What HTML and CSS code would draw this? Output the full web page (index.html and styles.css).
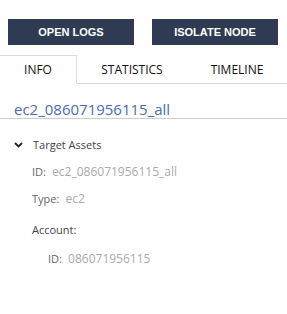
FILE: index.html
```html
<!DOCTYPE html>
<html lang="en">
<head>
    <meta charset="UTF-8">
    <title>Node Details</title>
    <link rel="stylesheet" href="styles.css">
</head>
<body>
    <div class="panel">
        <div class="actions">
            <button class="action-btn">OPEN LOGS</button>
            <button class="action-btn">ISOLATE NODE</button>
        </div>

        <div class="tabs">
            <div class="tab active">INFO</div>
            <div class="tab">STATISTICS</div>
            <div class="tab">TIMELINE</div>
        </div>

        <h2 class="node-title">ec2_086071956115_all</h2>

        <div class="tree">
            <div class="tree-head">
                <svg class="chevron" width="9" height="6" viewBox="0 0 9 6">
                    <path d="M1 1 L4.5 4.5 L8 1" fill="none" stroke="#222" stroke-width="1.8"/>
                </svg>
                <span>Target Assets</span>
            </div>
            <div class="row"><span class="key">ID:</span> <span class="val">ec2_086071956115_all</span></div>
            <div class="row"><span class="key">Type:</span> <span class="val">ec2</span></div>
            <div class="group">
                <div class="row group-head"><span class="key dark">Account:</span></div>
                <div class="row nested"><span class="key">ID:</span> <span class="val">086071956115</span></div>
            </div>
        </div>
    </div>
</body>
</html>
```

FILE: styles.css
```css
body {
    margin: 0;
    font-family: 'Open Sans', sans-serif;
    background: #fff;
    color: #333;
}

.panel {
    width: 287px;
}

/* top buttons */
.actions {
    display: flex;
    justify-content: space-between;
    padding: 19px 9px 0 8px;
}

.action-btn {
    width: 126px;
    height: 26px;
    border: none;
    background-color: #2e3b52;
    color: #fff;
    font-family: 'Liberation Sans', Arial, sans-serif;
    font-weight: bold;
    font-size: 11px;
    padding: 0;
}

/* tabs */
.tabs {
    display: flex;
    margin-top: 10px;
    border-bottom: 1px solid #ddd;
}

.tab {
    height: 27px;
    line-height: 28px;
    font-size: 12px;
    color: #111;
    text-align: center;
    border-top: 1px solid transparent;
    border-right: 1px solid transparent;
    margin-bottom: -1px;
}

.tab:nth-child(1) {
    width: 76px;
}

.tab:nth-child(2) {
    width: 110px;
}

.tab:nth-child(3) {
    flex: 1;
}

.tab.active {
    border-color: #ddd;
    border-bottom: 1px solid #fff;
    background: #fff;
}

/* title */
.node-title {
    margin: 0;
    padding: 15px 0 0 14px;
    height: 19px;
    line-height: 20px;
    font-size: 15px;
    font-weight: normal;
    color: #4a6cb3;
    border-bottom: 1px solid #ccc;
}

/* tree */
.tree {
    padding: 17px 0 0 14px;
    font-size: 12px;
    line-height: 18px;
}

.tree-head {
    display: flex;
    align-items: center;
    height: 18px;
    font-size: 11px;
    color: #444;
    margin-bottom: 1px;
}

.chevron {
    margin-right: 10px;
}

.row {
    padding-left: 18px;
    height: 18px;
    margin-top: 9px;
}

.group {
    margin-top: 13px;
}

.group .group-head {
    margin-top: 0;
}

.row.nested {
    padding-left: 34px;
    margin-top: 11px;
}

.key {
    font-size: 11px;
    color: #666;
}

.key.dark {
    color: #444;
}

.val {
    color: #aaa;
    margin-left: 3px;
}
```
